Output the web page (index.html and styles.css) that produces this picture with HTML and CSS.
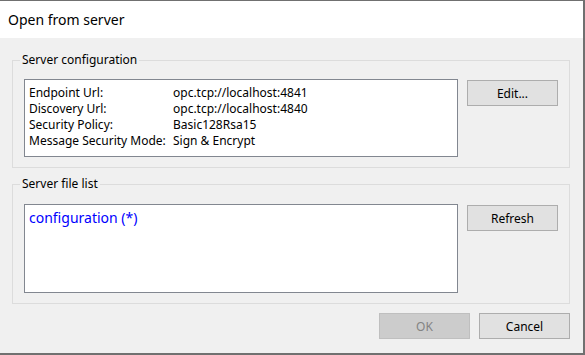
FILE: index.html
```html
<!DOCTYPE html>
<html lang="en">
<head>
    <meta charset="UTF-8">
    <title>Open from server</title>
    <link rel="stylesheet" href="styles.css">
</head>
<body>
    <div class="window">
        <div class="titlebar">Open from server</div>
        <div class="content">
            <fieldset class="group group-config">
                <legend>Server configuration</legend>
                <div class="row">
                    <div class="listbox info">
                        <span>Endpoint Url:</span><span>opc.tcp://localhost:4841</span>
                        <span>Discovery Url:</span><span>opc.tcp://localhost:4840</span>
                        <span>Security Policy:</span><span>Basic128Rsa15</span>
                        <span>Message Security Mode:</span><span>Sign &amp; Encrypt</span>
                    </div>
                    <button class="btn">Edit...</button>
                </div>
            </fieldset>

            <fieldset class="group group-files">
                <legend>Server file list</legend>
                <div class="row">
                    <div class="listbox files">
                        <div class="file-item">configuration (*)</div>
                    </div>
                    <button class="btn">Refresh</button>
                </div>
            </fieldset>

            <div class="actions">
                <button class="btn" disabled>OK</button>
                <button class="btn">Cancel</button>
            </div>
        </div>
    </div>
</body>
</html>
```

FILE: styles.css
```css
body {
    margin: 0;
    font-family: "Noto Sans", sans-serif;
    font-size: 12px;
    color: #000;
    background: #f0f0f0;
}

.window {
    width: 583px;
    height: 352px;
    border-top: 1px solid #707070;
    border-right: 2px solid #707070;
    border-bottom: 2px solid #707070;
    display: flex;
    flex-direction: column;
}

.titlebar {
    height: 37px;
    line-height: 38px;
    padding-left: 8px;
    background: #fff;
    font-size: 14px;
}

.content {
    flex: 1;
    background: #f0f0f0;
    padding: 14px 13px 0 12px;
}

.group {
    margin: 0;
    padding: 0;
    border: 1px solid #dcdcdc;
    min-width: 0;
}

.group legend {
    margin-left: 7px;
    padding: 0 2px;
    line-height: 16px;
}

.row {
    display: flex;
    align-items: flex-start;
    gap: 9px;
    padding: 11px 11px 10px 11px;
}

.group-files {
    margin-top: 8px;
}

.group-files .row {
    padding-top: 12px;
}

.listbox {
    flex: 1;
    background: #fff;
    border: 1px solid #828790;
    box-sizing: border-box;
}

.info {
    height: 78px;
    padding: 5px 4px 0 4px;
    display: grid;
    grid-template-columns: 144px 1fr;
    grid-auto-rows: 16px;
    line-height: 16px;
}

.files {
    height: 89px;
    padding: 2px 4px;
}

.file-item {
    color: #0000ff;
    font-size: 14px;
    line-height: 22px;
}

.btn {
    width: 91px;
    height: 26px;
    margin: 1px 0 0 0;
    padding: 0;
    font-family: inherit;
    font-size: 12px;
    color: #000;
    background: #e1e1e1;
    border: 1px solid #adadad;
    box-sizing: border-box;
}

.btn:disabled {
    background: #cccccc;
    border-color: #bfbfbf;
    color: #838383;
}

.actions {
    display: flex;
    justify-content: flex-end;
    gap: 9px;
    margin-top: 9px;
}

.actions .btn {
    margin: 0;
}
```
